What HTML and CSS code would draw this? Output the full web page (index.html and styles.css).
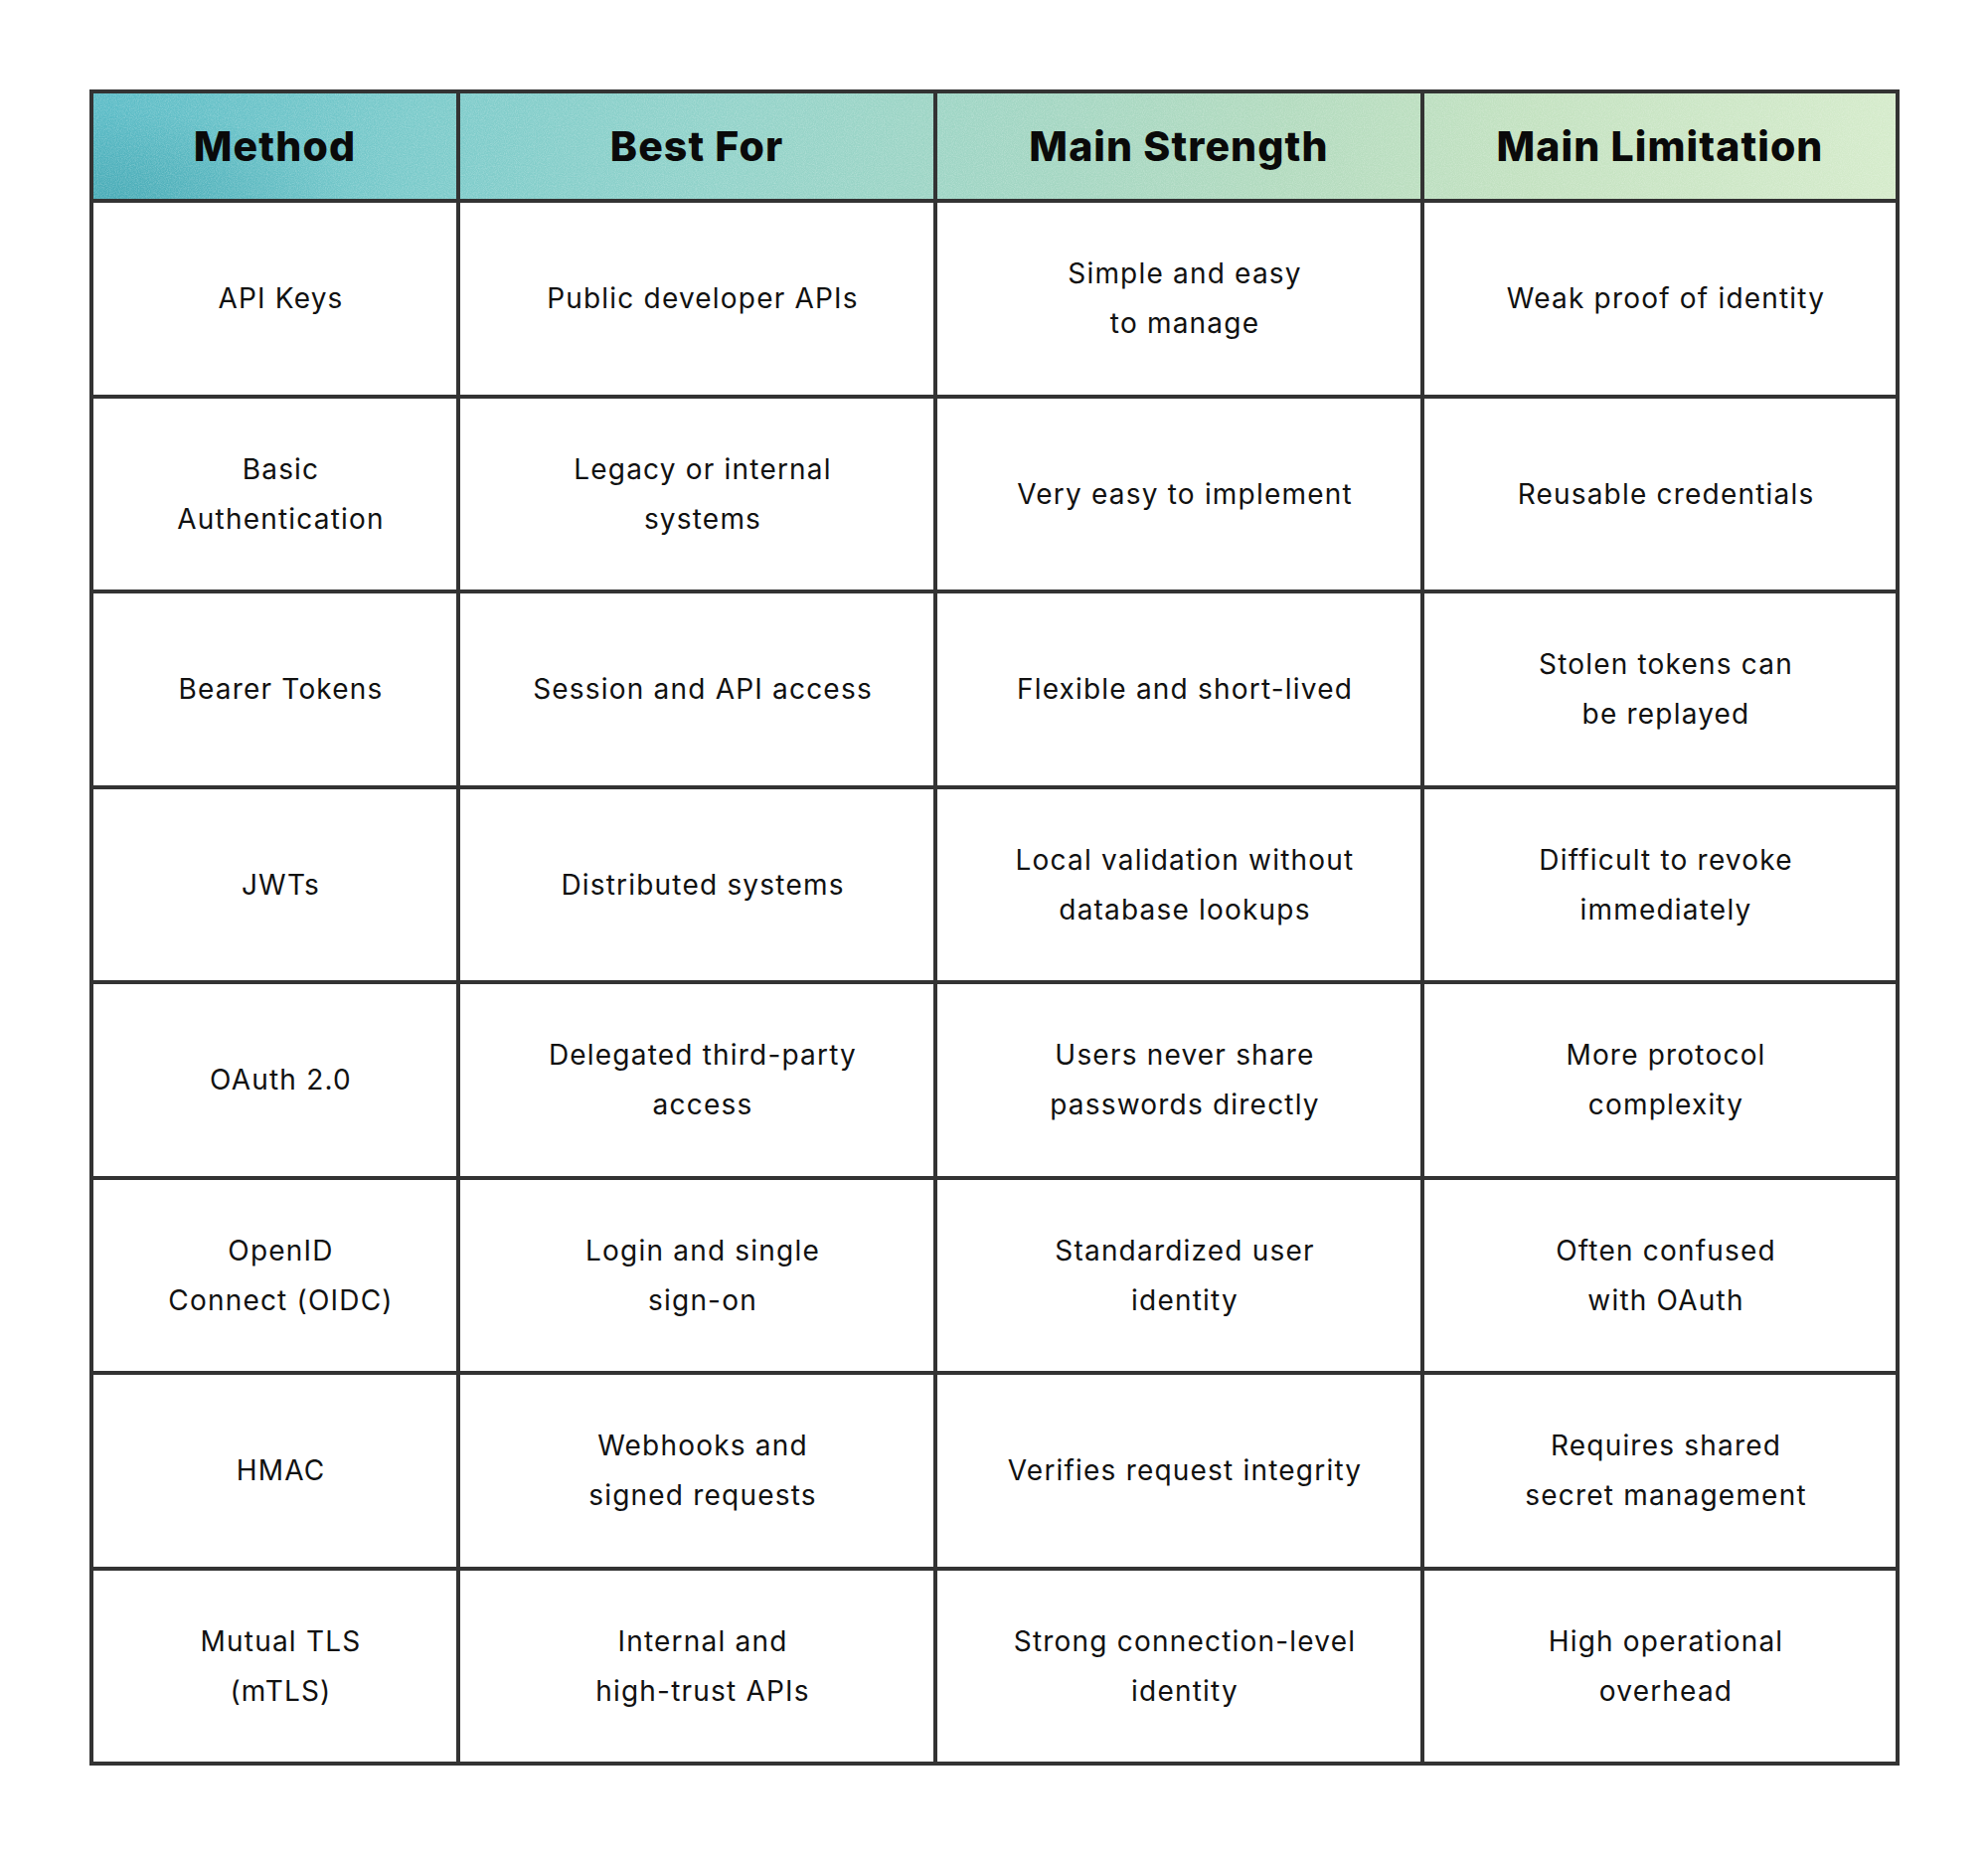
FILE: index.html
```html
<!DOCTYPE html>
<html lang="en">
<head>
<meta charset="utf-8">
<title>API Authentication Methods</title>
<link rel="stylesheet" href="styles.css">
</head>
<body>
<div class="page">
  <div class="table">
    <div class="row head">
      <svg class="noise" aria-hidden="true" width="100%" height="100%">
        <filter id="grain">
          <feTurbulence type="fractalNoise" baseFrequency="0.9" numOctaves="2" stitchTiles="stitch"/>
          <feColorMatrix type="matrix" values="0 0 0 0 1  0 0 0 0 1  0 0 0 0 1  0 0 0 1.4 -0.5"/>
        </filter>
        <rect width="100%" height="100%" filter="url(#grain)"/>
      </svg>
      <div class="cell">Method</div>
      <div class="cell">Best For</div>
      <div class="cell">Main Strength</div>
      <div class="cell">Main Limitation</div>
    </div>
    <div class="row">
      <div class="cell">API Keys</div>
      <div class="cell">Public developer APIs</div>
      <div class="cell">Simple and easy<br>to manage</div>
      <div class="cell">Weak proof of identity</div>
    </div>
    <div class="row">
      <div class="cell">Basic<br>Authentication</div>
      <div class="cell">Legacy or internal<br>systems</div>
      <div class="cell">Very easy to implement</div>
      <div class="cell">Reusable credentials</div>
    </div>
    <div class="row">
      <div class="cell">Bearer Tokens</div>
      <div class="cell">Session and API access</div>
      <div class="cell">Flexible and short-lived</div>
      <div class="cell">Stolen tokens can<br>be replayed</div>
    </div>
    <div class="row">
      <div class="cell">JWTs</div>
      <div class="cell">Distributed systems</div>
      <div class="cell">Local validation without<br>database lookups</div>
      <div class="cell">Difficult to revoke<br>immediately</div>
    </div>
    <div class="row">
      <div class="cell">OAuth 2.0</div>
      <div class="cell">Delegated third-party<br>access</div>
      <div class="cell">Users never share<br>passwords directly</div>
      <div class="cell">More protocol<br>complexity</div>
    </div>
    <div class="row">
      <div class="cell">OpenID<br>Connect (OIDC)</div>
      <div class="cell">Login and single<br>sign-on</div>
      <div class="cell">Standardized user<br>identity</div>
      <div class="cell">Often confused<br>with OAuth</div>
    </div>
    <div class="row">
      <div class="cell">HMAC</div>
      <div class="cell">Webhooks and<br>signed requests</div>
      <div class="cell">Verifies request integrity</div>
      <div class="cell">Requires shared<br>secret management</div>
    </div>
    <div class="row">
      <div class="cell">Mutual TLS<br>(mTLS)</div>
      <div class="cell">Internal and<br>high-trust APIs</div>
      <div class="cell">Strong connection-level<br>identity</div>
      <div class="cell">High operational<br>overhead</div>
    </div>
  </div>
</div>
</body>
</html>
```

FILE: styles.css
```css
html, body {
  margin: 0;
  padding: 0;
  background: #ffffff;
}

body {
  font-family: "Inter", "Noto Sans", "DejaVu Sans", sans-serif;
  color: #111111;
}

.page {
  width: 2000px;
  height: 1866px;
  padding: 90px 0 0 90px;
  box-sizing: border-box;
}

.table {
  width: 1821px;
  border: 4px solid #333333;
  box-sizing: border-box;
  display: flex;
  flex-direction: column;
}

.row {
  display: grid;
  grid-template-columns: 365px 480px 490px 478px;
  height: 192.5px;
  border-top: 4px solid #333333;
}

.row .cell {
  display: flex;
  align-items: center;
  justify-content: center;
  text-align: center;
  font-size: 28px;
  line-height: 50px;
  font-weight: 400;
  letter-spacing: 1.2px;
  padding-left: 12px;
  box-sizing: border-box;
}

.row .cell + .cell {
  border-left: 4px solid #333333;
}

.row.head {
  position: relative;
  height: 106px;
  border-top: none;
  background:
    radial-gradient(ellipse 260px 90px at 0% 100%, rgba(60, 160, 172, 0.6), rgba(60, 160, 172, 0) 100%),
    linear-gradient(90deg, #5cbcc7 0%, #7ccbcb 18%, #93d3ca 35%, #a3d6c3 52%, #b3dbbf 66%, #c4e2c1 80%, #d5ebcb 100%);
}

.noise {
  position: absolute;
  left: 0;
  top: 0;
  width: 100%;
  height: 100%;
  opacity: 0.3;
  pointer-events: none;
}

.row.head .cell {
  position: relative;
  font-size: 41px;
  line-height: 50px;
  font-weight: 800;
  letter-spacing: 1.1px;
  color: #0a0a0a;
  padding-left: 0;
}
```
